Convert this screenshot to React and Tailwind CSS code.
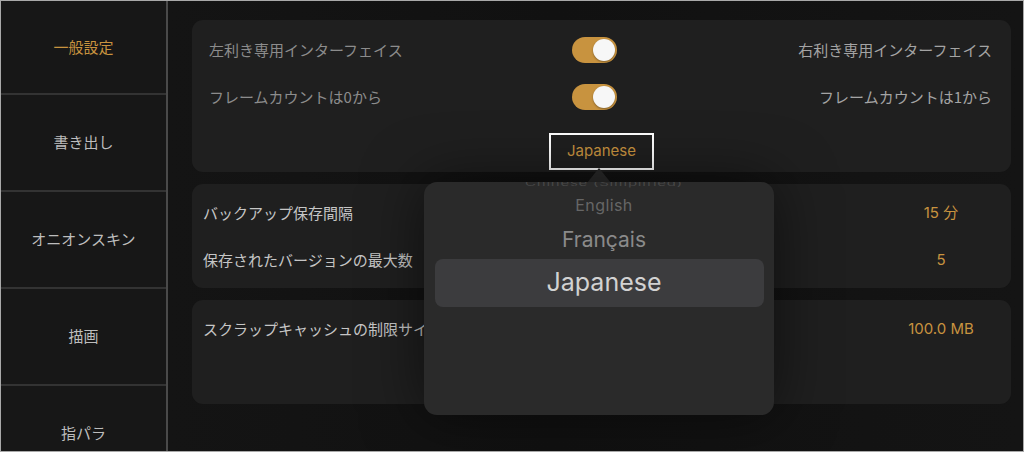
const JP = { fontFamily: '"Noto Sans CJK JP", "Noto Sans", sans-serif' };
const LATIN = { fontFamily: 'Inter, "Noto Sans CJK JP", sans-serif' };

const NAV = ['一般設定', '書き出し', 'オニオンスキン', '描画', '指パラ'];

function Toggle() {
  return (
    <div className="w-[45px] h-[26px] rounded-full bg-[#c8933f] flex items-center justify-end pr-[2px] justify-self-start">
      <div className="w-[22px] h-[22px] rounded-full bg-[#f7f7f7] shadow-[0_1px_2px_rgba(0,0,0,0.35)]" />
    </div>
  );
}

function ToggleRow({ left, right }) {
  return (
    <div className="grid grid-cols-[1fr_60px_1fr] items-center h-[26px]">
      <span className="text-[15px] text-[#8c8c8c]" style={JP}>{left}</span>
      <Toggle />
      <span className="text-[15px] text-[#a4a4a4] text-right pr-[2px]" style={JP}>{right}</span>
    </div>
  );
}

function ValueRow({ label, value }) {
  return (
    <div className="flex items-center justify-between h-[24px]">
      <span className="text-[15px] text-[#c6c6c6]" style={JP}>{label}</span>
      <span className="w-[100px] text-center text-[15px] text-[#c8933f]" style={LATIN}>{value}</span>
    </div>
  );
}

export default function App() {
  return (
    <div className="w-[1024px] h-[452px] border border-[#a9a9a9] bg-[#141414] flex overflow-hidden">
      {/* sidebar */}
      <div className="w-[167px] shrink-0 bg-[#171717] border-r-2 border-[#4a4a4a] flex flex-col overflow-hidden">
        {NAV.map((label, i) => (
          <div
            key={label}
            className={`shrink-0 flex items-center justify-center border-b-2 border-[#333333] ${i === 0 ? 'h-[94px]' : 'h-[97px]'}`}
          >
            <span className={`text-[15px] ${i === 0 ? 'text-[#c8933f]' : 'text-[#bdbdbd]'}`} style={JP}>
              {label}
            </span>
          </div>
        ))}
      </div>

      {/* main */}
      <div className="flex-1 relative pl-[24px] pr-[12px] pt-[19px] flex flex-col gap-[12px] bg-[linear-gradient(90deg,#141414_0%,#111111_45%,#141414_100%)]">
        <div className="h-[152px] rounded-[11px] bg-[#1f1f1f] px-[17px] pt-[17px] flex flex-col">
          <ToggleRow left="左利き専用インターフェイス" right="右利き専用インターフェイス" />
          <div className="h-[21px]" />
          <ToggleRow left="フレームカウントは0から" right="フレームカウントは1から" />
          <div className="flex justify-center mt-[23px]">
            <div className="w-[105px] h-[37px] border-2 border-white flex items-center justify-center">
              <span className="text-[15px] text-[#c8933f]" style={LATIN}>Japanese</span>
            </div>
          </div>
        </div>

        <div className="h-[104px] rounded-[11px] bg-[#1f1f1f] pl-[11px] pr-[20px] pt-[17px] flex flex-col gap-[23px]">
          <ValueRow label="バックアップ保存間隔" value="15 分" />
          <ValueRow label="保存されたバージョンの最大数" value="5" />
        </div>

        <div className="h-[104px] rounded-[11px] bg-[#1f1f1f] pl-[11px] pr-[20px] pt-[17px]">
          <ValueRow label="スクラップキャッシュの制限サイズ" value="100.0 MB" />
        </div>

        {/* language picker popover */}
        <div className="absolute left-[419px] top-[167px] w-0 h-0 border-l-[12px] border-r-[12px] border-b-[15px] border-l-transparent border-r-transparent border-b-[#2a2a2a]" />
        <div
          className="absolute left-[256px] top-[181px] w-[350px] h-[233px] rounded-[13px] bg-[#2a2a2a] overflow-hidden shadow-[0_0_60px_rgba(0,0,0,0.55)] flex flex-col items-center"
          style={LATIN}
        >
          <span className="pl-[10px] text-[15px] leading-[15px] text-[#474747] tracking-wider -mt-[6px] scale-y-50">Chinese (Simplified)</span>
          <span className="pl-[10px] text-[16px] leading-[20px] text-[#666666] tracking-wide mt-[4px]">English</span>
          <span className="pl-[10px] text-[21px] leading-[26px] text-[#8a8a8a] mt-[12px]">Français</span>
          <div className="mt-[6px] w-[329px] h-[48px] rounded-[8px] bg-[#3c3c3e] flex items-center justify-center pl-[10px]">
            <span className="text-[25px] text-[#d2d2d2]">Japanese</span>
          </div>
        </div>
      </div>
    </div>
  );
}
